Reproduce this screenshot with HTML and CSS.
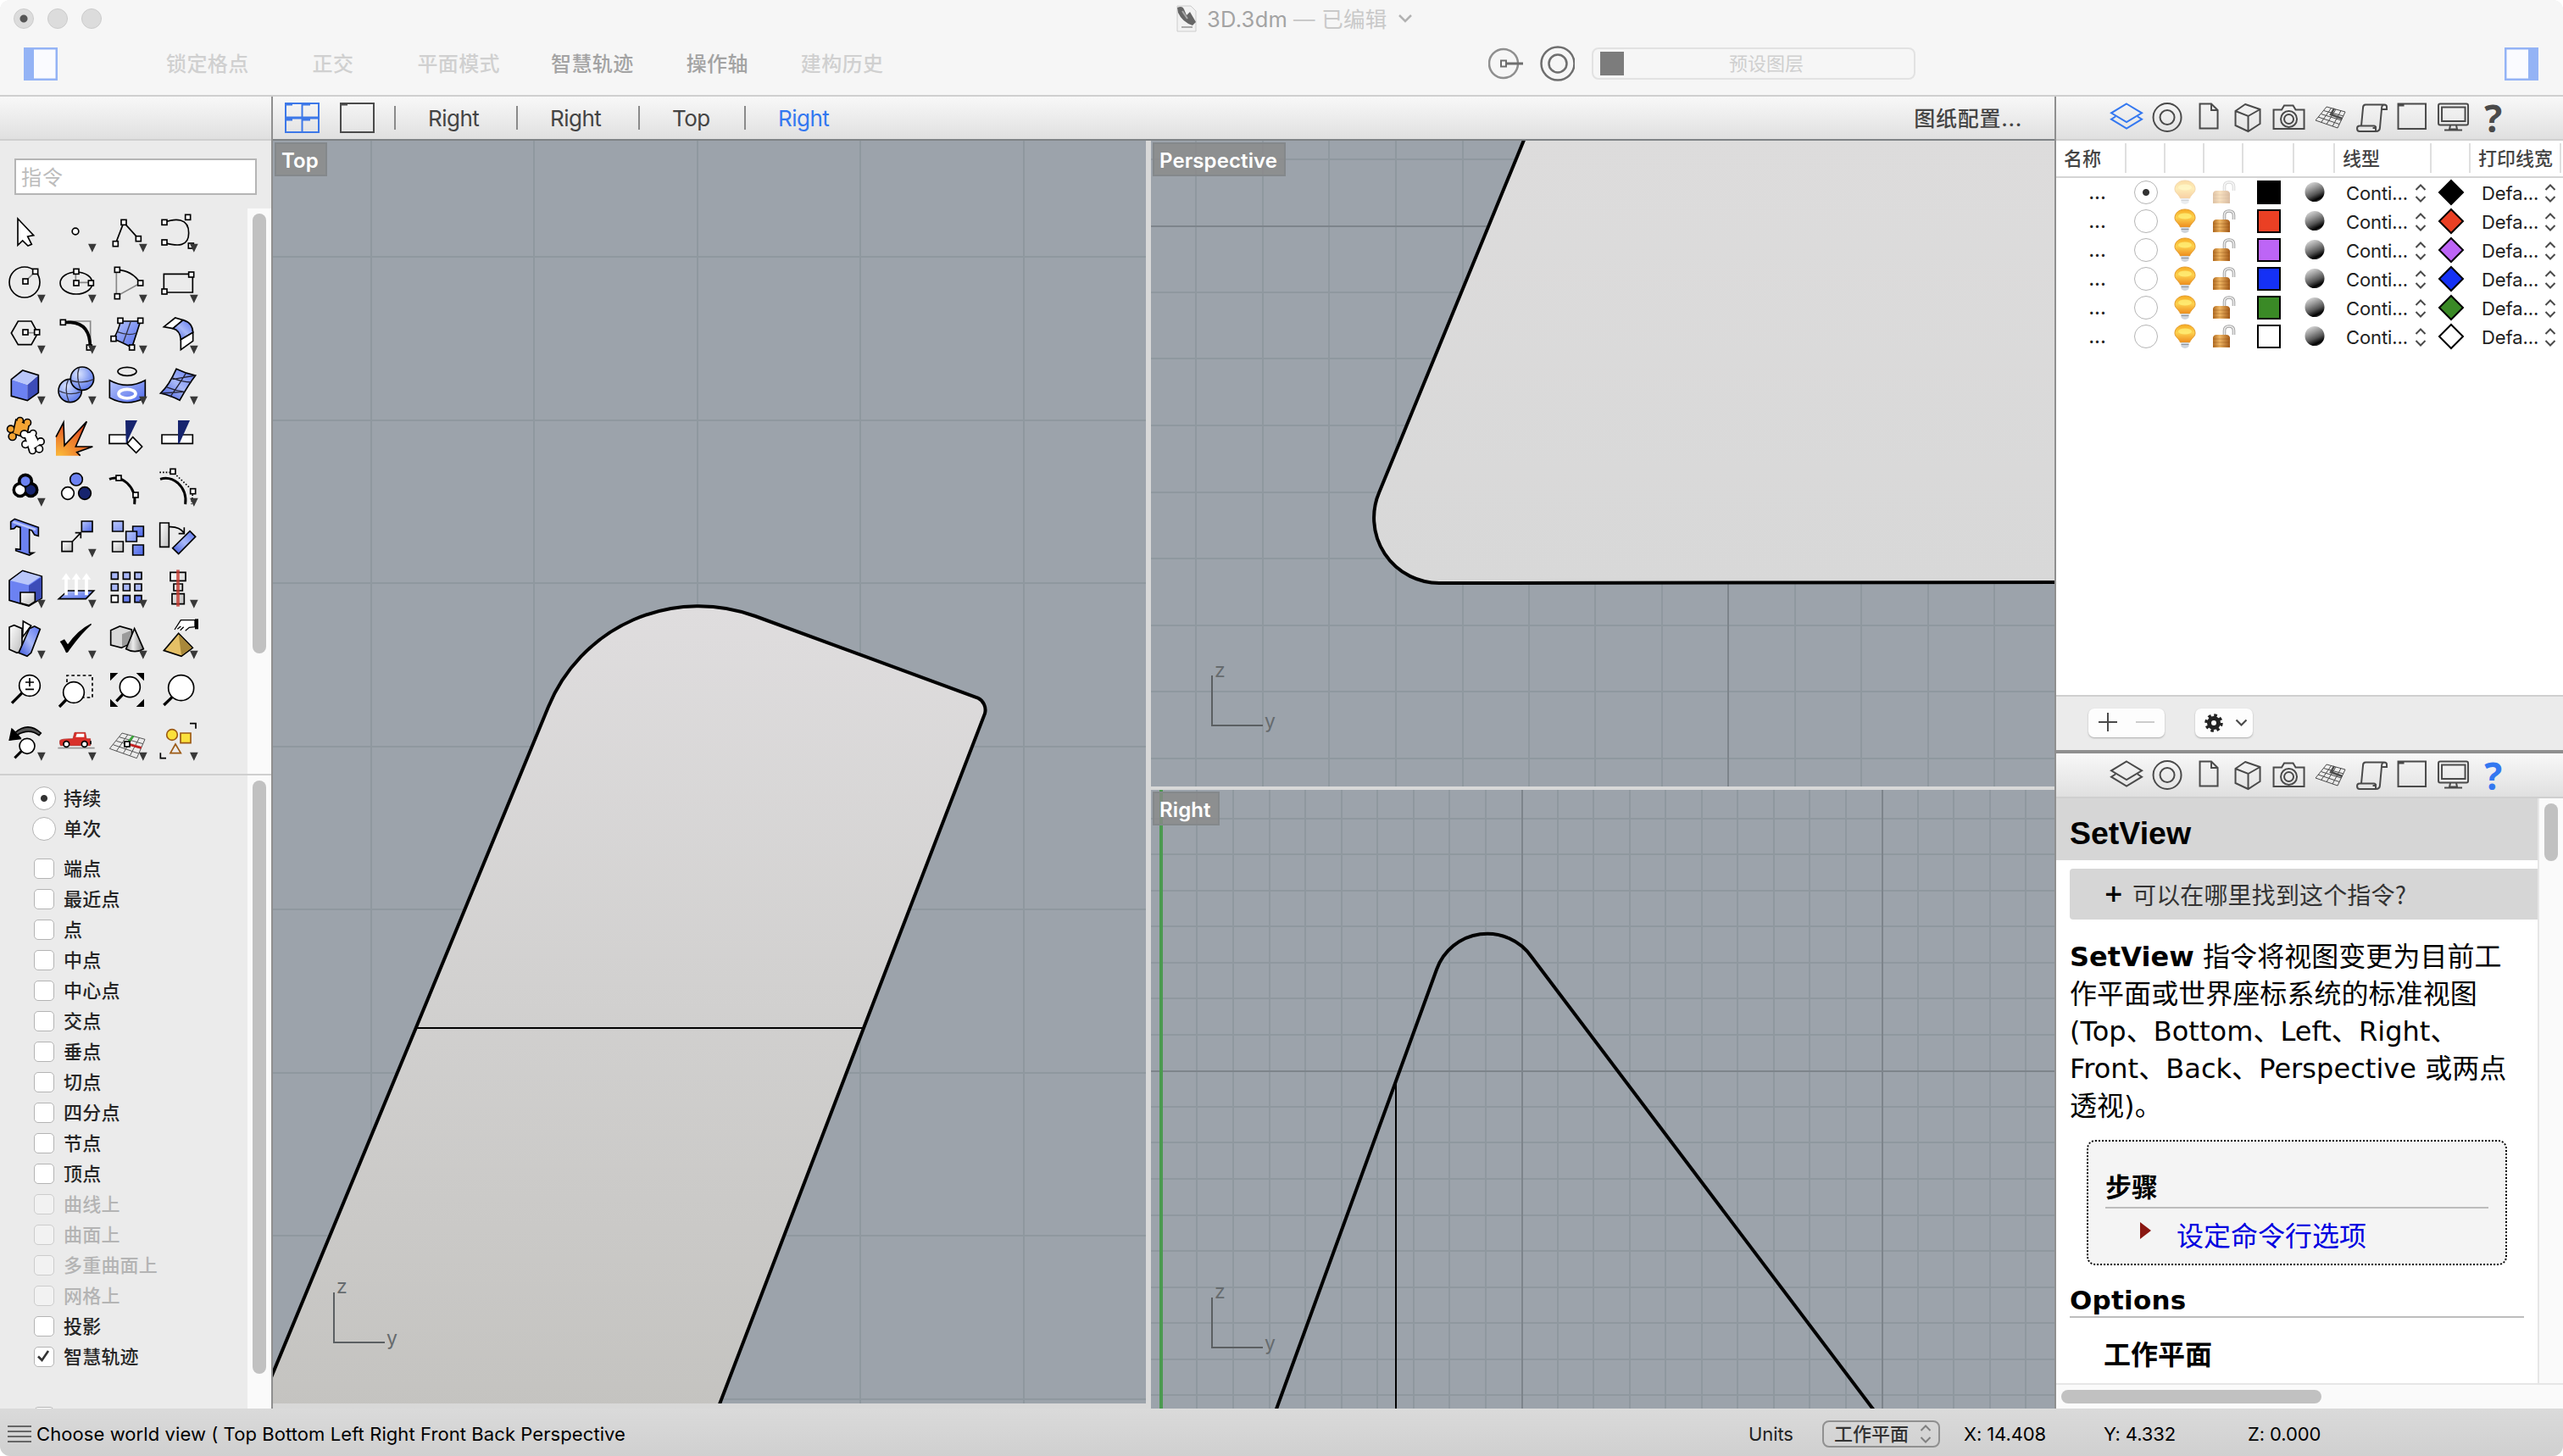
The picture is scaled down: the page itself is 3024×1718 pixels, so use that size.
FILE: index.html
```html
<!DOCTYPE html>
<html lang="zh-CN">
<head>
<meta charset="utf-8">
<title>3D.3dm</title>
<link rel="stylesheet" href="styles.css">
</head>
<body>
<svg class="defs" width="0" height="0">
  <defs>
    <linearGradient id="blue" x1="0" y1="0" x2="1" y2="1"><stop offset="0" stop-color="#b9c7fb"/><stop offset="1" stop-color="#4d68ea"/></linearGradient>
    <linearGradient id="blueV" x1="0" y1="1" x2="1" y2="0"><stop offset="0" stop-color="#3550d8"/><stop offset=".5" stop-color="#a9b9f8"/><stop offset="1" stop-color="#5a73ee"/></linearGradient>
    <radialGradient id="ball" cx=".35" cy=".3" r=".75"><stop offset="0" stop-color="#dbe5ff"/><stop offset=".6" stop-color="#8ba2f3"/><stop offset="1" stop-color="#5a76e8"/></radialGradient>
    <linearGradient id="grey" x1="0" y1="0" x2="1" y2="1"><stop offset="0" stop-color="#fff"/><stop offset="1" stop-color="#bdbdbd"/></linearGradient>
    <linearGradient id="cone" x1="0" y1="0" x2="1" y2="0"><stop offset="0" stop-color="#888"/><stop offset=".4" stop-color="#eee"/><stop offset="1" stop-color="#777"/></linearGradient>
    <radialGradient id="fire" cx=".1" cy="1" r="1.1"><stop offset="0" stop-color="#fbb93a"/><stop offset="1" stop-color="#e0451f"/></radialGradient>
    <linearGradient id="bulbG" x1="0" y1="0" x2="0" y2="1"><stop offset="0" stop-color="#f6ab22"/><stop offset=".45" stop-color="#fdd24f"/><stop offset="1" stop-color="#ee8c1e"/></linearGradient>
    <linearGradient id="lockG" x1="0" y1="0" x2="1" y2="0"><stop offset="0" stop-color="#b06a20"/><stop offset=".4" stop-color="#f0b765"/><stop offset="1" stop-color="#a35a18"/></linearGradient>
    <linearGradient id="sphG" x1=".3" y1="0" x2=".75" y2="1"><stop offset="0" stop-color="#d8d8d8"/><stop offset=".3" stop-color="#9a9a9a"/><stop offset=".6" stop-color="#555"/><stop offset=".85" stop-color="#000"/><stop offset="1" stop-color="#555"/></linearGradient>
    <linearGradient id="topG" x1="0" y1="0" x2="0" y2="1"><stop offset="0" stop-color="#dfddde"/><stop offset=".5" stop-color="#d1d0cf"/><stop offset="1" stop-color="#c4c3c0"/></linearGradient>
    <linearGradient id="perG" x1="0" y1="0" x2="0" y2="1"><stop offset="0" stop-color="#dddcdc"/><stop offset="1" stop-color="#d8d8d8"/></linearGradient>
    <rect id="h" x="-9" y="-9" width="18" height="18" fill="#fff" stroke="#000" stroke-width="5"/>
    <path id="tri" d="M132 128h29l-14.500 30z" fill="#383838"/>
    <g id="pzA"><path d="M58 34 100 50 92 92 48 78Z"/><circle cx="71" cy="34" r="9"/><circle cx="97" cy="41" r="10"/><circle cx="38" cy="64" r="10"/><circle cx="44" cy="90" r="11"/></g>
    <g id="pzB"><path d="M86 80 118 76 140 118 106 140Z"/><circle cx="86" cy="82" r="11"/><circle cx="117" cy="79" r="9"/><circle cx="144" cy="108" r="10"/><circle cx="139" cy="134" r="10"/><circle cx="115" cy="140" r="9"/><circle cx="90" cy="118" r="10"/></g>
    <symbol id="i-layers" viewBox="0 0 48 50"><path d="M24 8.500 42 19.300 24 30 6 19.300ZM11 23.500 6 26.700 24 37.700 42 26.700 37 23.500"/></symbol>
    <symbol id="i-rings" viewBox="0 0 48 50"><circle cx="24" cy="24.500" r="16.500"/><circle cx="24" cy="24.500" r="8.500"/></symbol>
    <symbol id="i-doc" viewBox="0 0 48 50"><path d="M14.500 8.500H28L35.500 16V37.500H14.500ZM28 8.500V16H35.500"/></symbol>
    <symbol id="i-box" viewBox="0 0 48 50"><path d="M20 9 37.500 15V32L23.500 41 8.500 34V17ZM8.500 17 23.500 23 37.500 15M23.500 23V41"/></symbol>
    <symbol id="i-cam" viewBox="0 0 48 50"><path d="M5.500 15.500H15L18 10.500H28.500L31.500 15.500H41.500V38H5.500Z"/><circle cx="23.500" cy="26.500" r="9.500"/><circle cx="23.500" cy="26.500" r="5.500"/></symbol>
    <symbol id="i-plane" viewBox="0 0 48 50"><path stroke-width="1" d="M20 12 42 18 33 37 7 28ZM16.500 16.500 40 23M13.500 20.500 37.500 28M10 24 35 32.500M25.500 13.500 13.500 30.500M31 15 20 32.500M37 16.500 27 35"/><path stroke-width="2.500" d="M29 14 25 21 38.500 26"/></symbol>
    <symbol id="i-scroll" viewBox="0 0 48 50"><path d="M36 15H42V12Q42 9.500 39 9.500H17Q14 9.500 14 13L12 34M39 9.500Q36 10 36 14L34 36Q34 41 29 41H10Q7 41 7 37.500 7 34.500 10 34.500H27Q29 34.500 29 37H25.500M29 35V41"/></symbol>
    <symbol id="i-win" viewBox="0 0 48 50"><path d="M7.500 8.500H40V38H7.500ZM8 10.500H14.500"/></symbol>
    <symbol id="i-mon" viewBox="0 0 48 50"><rect x="7" y="8.500" width="35" height="25" rx="2"/><path d="M11 12.500H38.500V29H11ZM21 34 20 38.500H29L28 34M14 39.500H35"/></symbol>
    <symbol id="i-bulb" viewBox="0 0 28 30"><path d="M14 1C7 1 2 5.500 2 11 2 15.500 7 17.500 8.500 22H19.500C21 17.500 26 15.500 26 11 26 5.500 21 1 14 1Z" fill="url(#bulbG)" stroke="#e39a2a" stroke-width="1"/><ellipse cx="14" cy="9" rx="8" ry="3.500" fill="#fff07a" opacity=".75"/><path d="M9.500 22H18.500V27Q14 31 9.500 27Z" fill="#cfd4db"/><path d="M9.500 24.500H18.500" stroke="#8d939c"/></symbol>
    <symbol id="i-lock" viewBox="0 0 28 30"><path d="M14.500 14V8Q14.500 3 20 3 25.500 3 25.500 8V13" fill="none" stroke="#a2a2a2" stroke-width="3.600"/><path d="M14.500 14V8Q14.500 3 20 3 25.500 3 25.500 8V13" fill="none" stroke="#ededed" stroke-width="1.600"/><path d="M1 16Q2 13 5 13H17Q20 13 21 16V28H1Z" fill="url(#lockG)"/><path d="M1 18H21M1 22H21M1 26H21" stroke="#8a4a12" opacity=".35"/></symbol>
    <symbol id="i-sph" viewBox="0 0 28 30"><circle cx="14" cy="14.500" r="11.500" fill="url(#sphG)"/></symbol>
    <symbol id="i-upd" viewBox="0 0 14 24"><path d="M1.500 8 7 2.500 12.500 8M1.500 16 7 21.500 12.500 16" fill="none" stroke="#4a4a4a" stroke-width="2"/></symbol>
    <symbol id="i-dia" viewBox="0 0 32 32"><path d="M16 2 30 16 16 30 2 16Z" stroke="#000" stroke-width="2"/></symbol>
    <g id="axis" fill="none" stroke="#5b5f62" stroke-width="2"><path d="M0-59V1M-1 0H60"/></g>
  </defs>
</svg>

<header class="head">
  <div class="titlebar">
    <div class="lights"><i class="edited"></i><i></i><i></i></div>
    <div class="doc">
      <svg width="26" height="32" viewBox="0 0 26 32"><path d="M2 1H18L24 7V31H2Z" fill="#f2f2f2" stroke="#ccc"/><path d="M2 3Q8 0 10 5L13 12 17 8 24 20 20 24Q8 20 3 9Z" fill="#666"/><path d="M8 7 14 16M7 26H20" stroke="#aaa" stroke-width="2"/></svg>
      <span class="name">3D.3dm</span><span class="state">— 已编辑</span>
      <svg width="18" height="12" viewBox="0 0 18 12"><path d="M2 2 9 9 16 2" fill="none" stroke="#b2b2b2" stroke-width="2.500"/></svg>
    </div>
  </div>
  <div class="tools">
    <svg class="side" width="40" height="39" viewBox="0 0 40 39"><rect x="1" y="1" width="38" height="37" fill="#fafbff" stroke="#94b3f5" stroke-width="3"/><path d="M0 0H12V39H0Z" fill="#94b3f5"/></svg>
    <nav class="modes"><span>锁定格点</span><span>正交</span><span>平面模式</span><span class="on">智慧轨迹</span><span class="on">操作轴</span><span>建构历史</span></nav>
    <svg class="rec" width="102" height="44" viewBox="0 0 102 44" fill="none"><circle cx="18" cy="22" r="17" stroke="#8f8f8f" stroke-width="2.500"/><path d="M21 22H41" stroke="#6e6e6e" stroke-width="3"/><rect x="15" y="18.500" width="6" height="7" stroke="#6e6e6e" stroke-width="2" fill="#fff"/><circle cx="82" cy="22" r="19.500" stroke="#6e6e6e" stroke-width="2.500"/><circle cx="82" cy="22" r="10.500" stroke="#6e6e6e" stroke-width="2.500"/></svg>
    <div class="layerbox"><i></i><span>预设图层</span></div>
    <svg class="side end" width="40" height="39" viewBox="0 0 40 39"><rect x="1" y="1" width="38" height="37" fill="#fafbff" stroke="#94b3f5" stroke-width="3"/><path d="M28 0H40V39H28Z" fill="#94b3f5"/></svg>
  </div>
</header>

<main class="work">
  <aside class="left">
    <div class="bar"></div>
    <div class="cmd"><div class="field">指令</div></div>
    <div class="pane palette">
      <div class="icons">
        <svg viewBox="0 0 180 180"><path d="M63 39V133L80 117 99 135 112 130 98 102 119 98Z" fill="#fff" stroke="#000" stroke-width="5"/></svg>
        <svg viewBox="0 0 180 180"><circle cx="87" cy="84" r="11.500" fill="#fff" stroke="#000" stroke-width="5"/><use href="#tri"/></svg>
        <svg viewBox="0 0 180 180"><path d="M49 128 78 52 130 110"/><use href="#h" x="49" y="128"/><use href="#h" x="78" y="52"/><use href="#h" x="130" y="110"/><use href="#tri"/></svg>
        <svg viewBox="0 0 180 180"><path d="M42 52C80 38 128 35 128 90 128 138 90 138 42 124"/><use href="#h" x="42" y="52"/><use href="#h" x="42" y="123"/><use href="#h" x="125" y="34"/><use href="#h" x="136" y="135"/><use href="#tri"/></svg>

        <svg viewBox="0 0 180 180"><circle cx="87" cy="84" r="54"/><path class="g" d="M90 81 125 46"/><use href="#h" x="90" y="81"/><use href="#h" x="125" y="46"/><use href="#tri"/></svg>
        <svg viewBox="0 0 180 180"><ellipse cx="90" cy="87" rx="57" ry="39"/><path class="g" d="M88 46V85H142"/><use href="#h" x="90" y="46"/><use href="#h" x="90" y="87"/><use href="#h" x="142" y="87"/><use href="#tri"/></svg>
        <svg viewBox="0 0 180 180"><path class="g" d="M52 40V134L137 87"/><path d="M55 40Q107 42 137 87"/><use href="#h" x="55" y="40"/><use href="#h" x="137" y="87"/><use href="#h" x="55" y="134"/><use href="#tri"/></svg>
        <svg viewBox="0 0 180 180"><path d="M40 55H142V120H40Z"/><use href="#h" x="137" y="57"/><use href="#h" x="42" y="117"/><use href="#tri"/></svg>

        <svg viewBox="0 0 180 180"><path d="M40 84 64 42H111L134 84 111 125H64Z"/><path class="g" d="M90 83H131"/><use href="#h" x="90" y="81"/><use href="#h" x="131" y="81"/><use href="#tri"/></svg>
        <svg viewBox="0 0 180 180"><path class="g" d="M60 42H140V125"/><path stroke-width="11" d="M43 46H70Q140 50 139 135"/><use href="#h" x="43" y="46"/><use href="#h" x="136" y="135"/><use href="#tri"/></svg>
        <svg viewBox="0 0 180 180"><path fill="url(#blue)" d="M66 42H137Q125 80 107 135Q75 118 42 104Q62 70 66 42Z"/><path stroke-width="4" stroke="#334" d="M56 80Q95 95 122 84M103 42Q90 80 76 118"/><use href="#h" x="66" y="40"/><use href="#h" x="137" y="40"/><use href="#h" x="42" y="104"/><use href="#h" x="107" y="135"/><use href="#tri"/></svg>
        <svg viewBox="0 0 180 180"><path fill="#fff" d="M40 62 80 30 108 38 72 68Z"/><path fill="url(#blueV)" d="M72 68 108 38Q142 48 143 82L100 107Q98 75 72 68Z"/><path fill="#fff" d="M100 107 143 82V112L100 143Z"/><use href="#tri"/></svg>

        <svg viewBox="0 0 180 180"><path fill="#6c82f2" stroke="none" d="M40 68 97 87V143L40 127Z"/><path fill="#3c4cb8" stroke="none" d="M97 87 136 53V115L97 143Z"/><path fill="#bac7fa" stroke="none" d="M40 68 80 36 136 53 97 87Z"/><path d="M40 68 80 36 136 53V115L97 143 40 127Z"/><use href="#tri"/></svg>
        <svg viewBox="0 0 180 180"><circle cx="68" cy="108" r="41" fill="url(#ball)"/><path stroke="#334" stroke-width="4" d="M28 108Q68 128 105 112M62 68Q46 100 64 148"/><circle cx="111" cy="65" r="41" fill="url(#ball)"/><path stroke="#334" stroke-width="4" d="M71 72Q115 85 151 68M100 26Q88 60 106 105"/><use href="#tri"/></svg>
        <svg viewBox="0 0 180 180"><ellipse cx="90" cy="40" rx="33" ry="15"/><path fill="url(#blue)" d="M28 71Q90 105 154 71V133Q90 167 28 133Z"/><ellipse cx="90" cy="119" rx="30" ry="16" stroke="#fff" stroke-width="11"/><use href="#tri"/></svg>
        <svg viewBox="0 0 180 180"><path fill="url(#blueV)" d="M84 31Q118 48 152 54Q128 85 96 142Q65 125 28 117Q58 90 84 31Z"/><path stroke="#223" stroke-width="4" d="M68 62Q105 78 137 78M48 95Q80 108 113 112M118 46Q95 85 62 130M152 54 70 68M113 112 30 117"/><use href="#tri"/></svg>

        <svg viewBox="0 0 180 180"><use href="#pzA" stroke-width="10"/><use href="#pzA" fill="#f5a433" stroke="none"/><use href="#pzB" stroke-width="10"/><use href="#pzB" fill="#fff" stroke="none"/></svg>
        <svg viewBox="0 0 180 180"><path fill="url(#fire)" stroke="none" d="M18 158V92L45 40 48 122 127 37 88 126 148 126 92 143 104 158Z"/><path d="M18 92 45 40 48 122 127 37 88 126 148 126 92 146 104 158"/></svg>
        <svg viewBox="0 0 180 180"><path fill="#fff" d="M27 84H90V115H27ZM110 92 143 126 122 148 90 116Z"/><path fill="#16246e" stroke="none" d="M84 33H126L86 116Z"/></svg>
        <svg viewBox="0 0 180 180"><path fill="#fff" d="M33 84H142V115H33Z"/><path fill="#16246e" stroke="none" d="M90 33H132L95 115H90Z"/></svg>

        <svg viewBox="0 0 180 180"><g stroke-width="15"><circle cx="90" cy="68" r="20"/><circle cx="71" cy="99" r="20"/><circle cx="109" cy="99" r="20"/></g><g stroke="none"><circle cx="71" cy="99" r="17" fill="#fff"/><circle cx="109" cy="99" r="17" fill="#16246e"/></g><circle cx="90" cy="68" r="19" fill="#6c82f2"/><use href="#tri"/></svg>
        <svg viewBox="0 0 180 180"><circle cx="90" cy="62" r="22" fill="#6c82f2"/><circle cx="60" cy="111" r="22" fill="#fff"/><circle cx="120" cy="111" r="22" fill="#16246e"/></svg>
        <svg viewBox="0 0 180 180"><path stroke-width="9" d="M27 61Q60 48 90 75 122 105 116 150"/><use href="#h" x="60" y="57"/><use href="#h" x="120" y="117"/></svg>
        <svg viewBox="0 0 180 180"><path stroke-width="9" d="M27 61Q60 50 90 75 122 105 116 150"/><path stroke-dasharray="5 6" d="M25 37H60M85 48 132 92M142 115 138 150"/><use href="#h" x="72" y="34"/><use href="#h" x="143" y="104"/><use href="#tri"/></svg>

        <svg viewBox="0 0 180 180"><path fill="#6c82f2" d="M38 32 52 22 136 52V82L122 78 112 62 104 60V142L118 142 104 150 56 134V128L72 130V52L58 48 50 56 38 58Z"/><path stroke="#bac7fa" stroke-width="8" d="M46 32 126 60"/></svg>
        <svg viewBox="0 0 180 180"><path fill="url(#blue)" d="M109 30H147V67H109Z"/><path fill="url(#grey)" d="M39 102H76V137H39Z"/><path d="M76 102 106 71M86 71H106V91"/><use href="#tri"/></svg>
        <svg viewBox="0 0 180 180"><path fill="url(#blue)" d="M38 30H76V66H38ZM110 48H148V84H110Z"/><path fill="url(#blue)" d="M86 66H124V102H86ZM110 114H148V150H110Z"/><path fill="url(#grey)" d="M38 102H76V138H38Z"/></svg>
        <svg viewBox="0 0 180 180"><path fill="url(#grey)" d="M26 36H58V121H26Z"/><path fill="url(#blueV)" d="M132 65 152 85 92 146 71 125Z"/><path d="M58 50Q95 48 112 72M112 52V74H92"/></svg>

        <svg viewBox="0 0 180 180"><path fill="#6c82f2" d="M33 60 80 25 148 45V122L102 150 33 130Z"/><path fill="#bac7fa" stroke="none" d="M36 60 80 28 144 46 100 76Z"/><path fill="#3c4cb8" stroke="none" d="M102 78 146 48V122L124 134V100L102 112Z"/><path fill="url(#grey)" d="M72 102 124 102V134L102 148 72 140Z"/><use href="#tri"/></svg>
        <svg viewBox="0 0 180 180"><path fill="url(#blue)" d="M60 96H152L124 125H28Z"/><path stroke="#fff" stroke-width="11" d="M54 112V50M90 112V50M126 112V50"/><path fill="#fff" stroke="none" d="M38 56 54 34 70 56ZM74 56 90 34 106 56ZM110 56 126 34 142 56Z"/><use href="#tri"/></svg>
        <svg viewBox="0 0 180 180"><path fill="#a9b7f8" d="M34 31H58V55H34ZM76 31H100V55H76ZM117 31H141V55H117ZM34 72H58V96H34ZM76 72H100V96H76ZM117 72H141V96H117Z"/><path fill="#fff" d="M34 113H58V137H34Z"/><path fill="#6c82f2" d="M76 113H100V137H76ZM117 113H141V137H117Z"/><use href="#tri"/></svg>
        <svg viewBox="0 0 180 180"><path fill="url(#grey)" d="M63 31H117V61H63ZM75 72H106V96H75ZM69 107H112V143H69Z"/><path stroke="#c8372c" stroke-opacity=".8" stroke-width="11" d="M90 22V152"/><use href="#tri"/></svg>

        <svg viewBox="0 0 180 180"><path fill="url(#grey)" d="M33 45 50 38 78 50V130L60 136 33 124Z"/><path fill="#fff" d="M82 24 110 40 80 80Z"/><path fill="url(#blueV)" d="M104 50 122 42 142 52 110 136 96 148 66 136Z"/><use href="#tri"/></svg>
        <svg viewBox="0 0 180 180"><path fill="#000" stroke="none" d="M32 96 48 88 60 106Q95 55 142 32L144 36Q105 70 60 134L54 136Q44 112 32 96Z"/><use href="#tri"/></svg>
        <svg viewBox="0 0 180 180"><path fill="#d8d8d8" d="M32 56 64 42 106 54 106 100 70 118 32 108Z"/><path fill="#9a9a9a" stroke="none" d="M72 70 104 57V100L72 115Z"/><path fill="url(#cone)" d="M116 50 148 122Q118 140 86 122Z"/><use href="#tri"/></svg>
        <svg viewBox="0 0 180 180"><path fill="#e5c066" d="M92 67 142 118 102 148 40 128Z"/><path fill="#a8883a" stroke="none" d="M92 70 139 118 102 145Z"/><path fill="#fff" stroke-width="4" d="M78 54 100 20H150V44L130 46 116 58M88 52 100 42M98 56 110 44"/><path fill="#000" stroke="none" d="M150 16H162V52H150Z"/><use href="#tri"/></svg>

        <svg viewBox="0 0 180 180"><path stroke-width="10" d="M78 98 42 134"/><circle cx="105" cy="72" r="37" fill="#fff"/><path d="M90 60H120M105 45V75M90 85H120"/></svg>
        <svg viewBox="0 0 180 180"><path stroke-width="10" d="M56 120 30 147"/><path stroke-dasharray="11 9" d="M57 60V36H147V114H110"/><circle cx="81" cy="96" r="37" fill="#fff"/></svg>
        <svg viewBox="0 0 180 180"><path fill="#000" stroke="none" d="M30 27H58L30 55ZM150 27V55L122 27ZM30 147V119L58 147ZM150 147H122L150 119Z"/><path stroke-width="10" d="M74 104 52 127"/><circle cx="100" cy="77" r="36" fill="#fff"/></svg>
        <svg viewBox="0 0 180 180"><path stroke-width="10" d="M70 112 40 141"/><circle cx="101" cy="80" r="45" fill="#fff"/></svg>

        <svg viewBox="0 0 180 180"><path fill="#555" d="M145 60 138 68Q105 42 62 66L72 80 34 84 42 46 54 58Q100 18 145 60Z"/><path fill="#000" stroke="none" d="M32 86 44 44 76 78Z"/><path stroke-width="9" d="M76 124 52 148"/><circle cx="96" cy="106" r="27" fill="#fff"/><use href="#tri"/></svg>
        <svg viewBox="0 0 180 180"><path stroke="#999" stroke-width="5" d="M25 113H155"/><path fill="#d9302a" stroke="#a91d18" stroke-width="2" d="M32 86Q36 80 78 80L84 58H122L126 80H140V104H34Q30 96 32 86Z"/><path fill="#fff" stroke="none" d="M88 74 92 62H118V74Z"/><circle cx="55" cy="99" r="10" fill="#fff"/><circle cx="119" cy="99" r="10" fill="#fff"/><path d="M141 88V100"/><use href="#tri"/></svg>
        <svg viewBox="0 0 180 180"><path stroke="#555" stroke-width="3" d="M72 60 153 82 124 149 28 115ZM62 74 146 98M52 88 138 114M40 101 130 132M92 66 52 124M113 71 76 132M133 77 100 140"/><path stroke="#3aa53a" stroke-width="8" d="M94 92 112 70"/><path stroke="#c32222" stroke-width="9" d="M98 100 140 112"/><use href="#h" x="90" y="99"/><use href="#tri"/></svg>
        <svg viewBox="0 0 180 180"><path d="M132 26H153V44M28 130V149H48"/><g stroke="#9c5a14"><circle cx="69" cy="66" r="19" fill="#fbe13c"/><path fill="#fbe13c" d="M99 60H135V95H99Z"/><path d="M81 99 100 131H63Z"/></g><use href="#tri"/></svg>
      </div>
      <div class="scroll"><i class="thumb t1"></i></div>
    </div>
    <div class="pane snaps">
      <div class="list">
        <label><i class="radio on"></i>持续</label>
        <label class="last"><i class="radio"></i>单次</label>
        <label><i class="box"></i>端点</label>
        <label><i class="box"></i>最近点</label>
        <label><i class="box"></i>点</label>
        <label><i class="box"></i>中点</label>
        <label><i class="box"></i>中心点</label>
        <label><i class="box"></i>交点</label>
        <label><i class="box"></i>垂点</label>
        <label><i class="box"></i>切点</label>
        <label><i class="box"></i>四分点</label>
        <label><i class="box"></i>节点</label>
        <label><i class="box"></i>顶点</label>
        <label class="off"><i class="box"></i>曲线上</label>
        <label class="off"><i class="box"></i>曲面上</label>
        <label class="off"><i class="box"></i>多重曲面上</label>
        <label class="off"><i class="box"></i>网格上</label>
        <label><i class="box"></i>投影</label>
        <label><i class="box"><svg width="20" height="20" viewBox="0 0 20 20"><path d="M4 10.500 8.500 15 16 4" fill="none" stroke="#333" stroke-width="2.600"/></svg></i>智慧轨迹</label>
        <label class="cut"><i class="box"></i></label>
      </div>
      <div class="scroll"><i class="thumb t2"></i></div>
    </div>
  </aside>

  <section class="center">
    <div class="bar tabs">
      <svg width="41" height="36" viewBox="0 0 41 36" fill="none" stroke="#3d78e8" stroke-width="2"><path d="M1 1H40V35H1ZM20.500 1V35"/><path stroke-width="3" d="M1 18H40M1 2H9M21 2H30M1 20H9M21 20H30"/></svg>
      <svg width="41" height="36" viewBox="0 0 41 36" fill="none" stroke="#4a4a4a" stroke-width="2"><path d="M1 1H40V35H1Z"/><path stroke-width="3" d="M1 2H9"/></svg>
      <span class="tab">Right</span><span class="tab">Right</span><span class="tab top">Top</span><span class="tab cur">Right</span>
      <span class="layout">图纸配置...</span>
    </div>
    <div class="views">
      <div class="vp vtop">
        <svg width="1030" height="1490" viewBox="322 166 1030 1490">
          <path class="grid" d="M438 166V1656M630 166V1656M823 166V1656M1015 166V1656M1208 166V1656M322 303H1352M322 496H1352M322 688H1352M322 881H1352M322 1073H1352M322 1266H1352M322 1458H1352M322 1651H1352"/>
          <path fill="url(#topG)" d="M318 1630 490.800 1212.700 647 834A192 192 0 0 1 891 727L1153.700 823.500A16 16 0 0 1 1162 842L1019 1213 849 1656 820 1670H318Z"/>
          <path class="edge" d="M318 1630 490.800 1212.700 647 834A192 192 0 0 1 891 727L1153.700 823.500A16 16 0 0 1 1162 842L1019 1213 847 1662"/>
          <path d="M491 1213H1019" stroke="#000" stroke-width="2"/>
          <use href="#axis" x="394" y="1584"/><text class="ax" x="397" y="1526">z</text><text class="ax" x="456" y="1587">y</text>
        </svg>
        <b class="tag">Top</b>
      </div>
      <div class="stack">
        <div class="vp vper">
          <svg width="1066" height="762" viewBox="1358 166 1066 762">
            <path class="grid" d="M1411 166V928M1490 166V928M1568 166V928M1647 166V928M1726 166V928M1804 166V928M1882 166V928M1961 166V928M2118 166V928M2196 166V928M2275 166V928M2353 166V928M1358 188H2424M1358 345H2424M1358 423H2424M1358 502H2424M1358 581H2424M1358 659H2424M1358 738H2424M1358 816H2424M1358 895H2424"/>
            <path class="major" d="M2039 166V928M1358 267H2424"/>
            <path fill="url(#perG)" stroke="#000" stroke-width="4" d="M1801 158 1627.300 580.700A77 77 0 0 0 1698 688L2430 687V158Z"/>
            <use href="#axis" x="1430" y="856"/><text class="ax" x="1433" y="799">z</text><text class="ax" x="1492" y="859">y</text>
          </svg>
          <b class="tag">Perspective</b>
        </div>
        <div class="vp vright">
          <svg width="1066" height="730" viewBox="1358 932 1066 730">
            <path class="grid" d="M1412 932V1662M1455 932V1662M1498 932V1662M1540 932V1662M1583 932V1662M1625 932V1662M1668 932V1662M1710 932V1662M1753 932V1662M1838 932V1662M1880 932V1662M1923 932V1662M1965 932V1662M2008 932V1662M2050 932V1662M2093 932V1662M2135 932V1662M2178 932V1662M2263 932V1662M2305 932V1662M2348 932V1662M2390 932V1662M1358 966H2424M1358 1008H2424M1358 1051H2424M1358 1093H2424M1358 1136H2424M1358 1178H2424M1358 1221H2424M1358 1306H2424M1358 1348H2424M1358 1391H2424M1358 1434H2424M1358 1476H2424M1358 1519H2424M1358 1561H2424M1358 1604H2424M1358 1646H2424"/>
            <path class="major" d="M1796 932V1662M2221 932V1662M1358 1264H2424"/>
            <path d="M1370 932V1662" stroke="#4b9a50" stroke-width="4"/>
            <path class="edge" d="M1504 1668 1695 1144A63.500 63.500 0 0 1 1807 1129L2214 1668"/>
            <path d="M1647 1277V1662" stroke="#000" stroke-width="2"/>
            <use href="#axis" x="1430" y="1590"/><text class="ax" x="1433" y="1532">z</text><text class="ax" x="1492" y="1593">y</text>
          </svg>
          <b class="tag">Right</b>
        </div>
      </div>
    </div>
  </section>

  <aside class="right">
    <div class="bar insp">
      <svg class="cur"><use href="#i-layers"/></svg><svg><use href="#i-rings"/></svg><svg><use href="#i-doc"/></svg><svg><use href="#i-box"/></svg><svg><use href="#i-cam"/></svg><svg><use href="#i-plane"/></svg><svg><use href="#i-scroll"/></svg><svg><use href="#i-win"/></svg><svg><use href="#i-mon"/></svg><b>?</b>
    </div>
    <div class="row th"><span>名称</span><span></span><span></span><span></span><span></span><span></span><span>线型</span><span></span><span>打印线宽</span></div>
    <div class="rows">
      <div class="row"><span class="dots">...</span><span><i class="radio on"></i></span><span><svg class="ic dim"><use href="#i-bulb"/></svg></span><span><svg class="ic dim"><use href="#i-lock"/></svg></span><span><i class="sw black"></i></span><span><svg class="ic"><use href="#i-sph"/></svg></span><span class="txt">Conti...<svg class="ud"><use href="#i-upd"/></svg></span><span><svg class="di black"><use href="#i-dia"/></svg></span><span class="txt">Defa...<svg class="ud"><use href="#i-upd"/></svg></span></div>
      <div class="row"><span class="dots">...</span><span><i class="radio"></i></span><span><svg class="ic"><use href="#i-bulb"/></svg></span><span><svg class="ic"><use href="#i-lock"/></svg></span><span><i class="sw red"></i></span><span><svg class="ic"><use href="#i-sph"/></svg></span><span class="txt">Conti...<svg class="ud"><use href="#i-upd"/></svg></span><span><svg class="di red"><use href="#i-dia"/></svg></span><span class="txt">Defa...<svg class="ud"><use href="#i-upd"/></svg></span></div>
      <div class="row"><span class="dots">...</span><span><i class="radio"></i></span><span><svg class="ic"><use href="#i-bulb"/></svg></span><span><svg class="ic"><use href="#i-lock"/></svg></span><span><i class="sw violet"></i></span><span><svg class="ic"><use href="#i-sph"/></svg></span><span class="txt">Conti...<svg class="ud"><use href="#i-upd"/></svg></span><span><svg class="di violet"><use href="#i-dia"/></svg></span><span class="txt">Defa...<svg class="ud"><use href="#i-upd"/></svg></span></div>
      <div class="row"><span class="dots">...</span><span><i class="radio"></i></span><span><svg class="ic"><use href="#i-bulb"/></svg></span><span><svg class="ic"><use href="#i-lock"/></svg></span><span><i class="sw blue"></i></span><span><svg class="ic"><use href="#i-sph"/></svg></span><span class="txt">Conti...<svg class="ud"><use href="#i-upd"/></svg></span><span><svg class="di blue"><use href="#i-dia"/></svg></span><span class="txt">Defa...<svg class="ud"><use href="#i-upd"/></svg></span></div>
      <div class="row"><span class="dots">...</span><span><i class="radio"></i></span><span><svg class="ic"><use href="#i-bulb"/></svg></span><span><svg class="ic"><use href="#i-lock"/></svg></span><span><i class="sw green"></i></span><span><svg class="ic"><use href="#i-sph"/></svg></span><span class="txt">Conti...<svg class="ud"><use href="#i-upd"/></svg></span><span><svg class="di green"><use href="#i-dia"/></svg></span><span class="txt">Defa...<svg class="ud"><use href="#i-upd"/></svg></span></div>
      <div class="row"><span class="dots">...</span><span><i class="radio"></i></span><span><svg class="ic"><use href="#i-bulb"/></svg></span><span><svg class="ic"><use href="#i-lock"/></svg></span><span><i class="sw white"></i></span><span><svg class="ic"><use href="#i-sph"/></svg></span><span class="txt">Conti...<svg class="ud"><use href="#i-upd"/></svg></span><span><svg class="di white"><use href="#i-dia"/></svg></span><span class="txt">Defa...<svg class="ud"><use href="#i-upd"/></svg></span></div>
    </div>
    <div class="actions">
      <div class="btn add"><svg width="90" height="34" viewBox="0 0 90 34"><path d="M12 16H34M23 5V27" stroke="#4a4a4a" stroke-width="2"/><path d="M56 16H78" stroke="#ccc" stroke-width="2"/></svg></div>
      <div class="btn"><svg width="68" height="34" viewBox="0 0 68 34" fill="none" stroke="#222"><circle cx="22" cy="17" r="5.500" stroke-width="5"/><circle cx="22" cy="17" r="9" stroke-width="3.500" stroke-dasharray="3.530 3.530"/><path d="M48.500 13.500 54.500 19.500 60.500 13.500" stroke="#4a4a4a" stroke-width="2.200"/></svg></div>
    </div>
    <div class="bar insp second">
      <svg><use href="#i-layers"/></svg><svg><use href="#i-rings"/></svg><svg><use href="#i-doc"/></svg><svg><use href="#i-box"/></svg><svg><use href="#i-cam"/></svg><svg><use href="#i-plane"/></svg><svg><use href="#i-scroll"/></svg><svg><use href="#i-win"/></svg><svg><use href="#i-mon"/></svg><b class="cur">?</b>
    </div>
    <div class="help">
      <article>
        <h1>SetView</h1>
        <div class="where"><b>+</b>可以在哪里找到这个指令?</div>
        <p><b>SetView</b> 指令将视图变更为目前工<br>作平面或世界座标系统的标准视图<br>(Top、Bottom、Left、Right、<br>Front、Back、Perspective 或两点<br>透视)。</p>
        <div class="steps"><h2>步骤</h2><div class="step"><svg width="13" height="20" viewBox="0 0 13 20"><path d="M0 0 13 10 0 20Z" fill="#8a1812"/></svg><a>设定命令行选项</a></div></div>
        <h2 class="opt">Options</h2>
        <h3>工作平面</h3>
      </article>
      <div class="vtrack"><i></i></div>
    </div>
    <div class="htrack"><i></i></div>
  </aside>
</main>

<footer class="status">
  <svg width="28" height="22" viewBox="0 0 28 22"><path d="M0 2H28M0 8H28M0 14H28M0 20H28" stroke="#666" stroke-width="2"/></svg>
  <span class="prompt">Choose world view ( Top Bottom Left Right Front Back Perspective</span>
  <span class="units">Units</span>
  <span class="popup">工作平面<svg width="14" height="24" viewBox="0 0 14 24"><path d="M1.500 8 7 2.500 12.500 8M1.500 16 7 21.500 12.500 16" fill="none" stroke="#808080" stroke-width="2"/></svg></span>
  <span class="x">X: 14.408</span><span class="y">Y: 4.332</span><span class="z">Z: 0.000</span>
</footer>
</body>
</html>
```

FILE: styles.css
```css
* { box-sizing: border-box; }
html { background: #fff; }
body { margin: 0; width: 3024px; height: 1718px; display: flex; flex-direction: column; overflow: hidden; border-radius: 12px; background: #ebebeb; color: #222; font: 22px/1 Inter, "Noto Sans CJK SC", sans-serif; }
svg { display: block; flex: none; }
i { display: block; flex: none; font-style: normal; }
.defs { position: absolute; }

.head { height: 114px; flex: none; background: #f6f6f6; border-bottom: 2px solid #cfcfcf; }
.titlebar { height: 44px; display: flex; align-items: center; padding-left: 16px; }
.lights { display: flex; gap: 16px; }
.lights i { width: 24px; height: 24px; border-radius: 50%; background: #dcdcdc; border: 1px solid #cbcbcb; }
.lights .edited { background: radial-gradient(circle, #555 4px, #dcdcdc 5px); }
.doc { display: flex; align-items: center; margin-left: 1267px; font-size: 25.500px; }
.doc .name { color: #a3a3a3; margin-left: 11px; width: 102px; letter-spacing: .3px; padding-top: 1px; }
.doc .state { color: #c9c9c9; width: 123px; white-space: nowrap; letter-spacing: .3px; padding-top: 1px; }
.tools { height: 63px; display: flex; align-items: center; padding: 0 29px 0 28px; }
.modes { display: flex; width: 1660px; padding-left: 128px; font-size: 24px; letter-spacing: .4px; font-weight: 500; color: #d0d0d0; white-space: nowrap; }
.modes span { margin-right: 75px; }
.modes span:nth-child(3) { margin-right: 60px; }
.modes span:nth-child(4), .modes span:nth-child(5) { margin-right: 62px; }
.modes .on { color: #a3a3a3; }
.rec { margin-left: 28px; margin-top: -1px; }
.layerbox { width: 382px; height: 38px; margin-left: 20px; border: 2px solid #e2e2e2; border-radius: 8px; display: flex; align-items: center; padding-left: 8px; font-size: 22px; color: #cfcfcf; margin-top: -1px; }
.layerbox i { width: 28px; height: 28px; background: #7c7c7c; }
.layerbox span { margin-left: 124px; }
.side.end { margin-left: auto; }

.work { flex: 1; display: flex; min-height: 0; }
.bar { height: 52px; flex: none; background: linear-gradient(#f8f8f8, #e0e0e0); border-bottom: 2px solid #cfcfcf; }

.left { width: 322px; border-right: 2px solid #8f8f8f; display: flex; flex-direction: column; }
.cmd { height: 80px; flex: none; padding: 21px 0 0 17px; }
.field { width: 286px; height: 43px; border: 2px solid #b5b5b5; background: #fff; color: #bcbcbc; font-size: 24px; line-height: 42px; padding-left: 6px; letter-spacing: 1px; }
.pane { display: flex; justify-content: space-between; }
.palette { height: 669px; flex: none; border-bottom: 2px solid #cfcfcf; }
.icons { display: grid; grid-template-columns: repeat(4, 60px); grid-auto-rows: 60px; height: 660px; margin-top: -1px; }
.icons svg { width: 60px; height: 60px; fill: none; stroke: #000; stroke-width: 5; overflow: visible; }
.icons .g { stroke: #888; }
#tri { stroke: none; }
.scroll { width: 28px; background: #fafafa; padding-left: 6px; }
.thumb { width: 16px; border-radius: 8px; background: #c1c1c1; }
.t1 { height: 519px; margin-top: 6px; }
.t2 { height: 700px; margin-top: 6px; }
.snaps { flex: 1; min-height: 0; overflow: hidden; }
.list { padding: 9px 0 0 38px; }
.list label { display: flex; align-items: center; height: 36px; letter-spacing: .2px; font-weight: 500; color: #262626; white-space: nowrap; }
.list .last { margin-bottom: 11px; }
.list .off { color: #b4b4b4; }
.list .off .box { background: #f2f2f2; border-color: #ccc; }
.radio { width: 28px; height: 28px; border-radius: 50%; background: #fff; border: 1.500px solid #b4b4b4; }
.radio.on { background: radial-gradient(circle, #333 3.500px, #fff 4.500px); }
.list .radio { margin-right: 9px; }
.box { width: 24px; height: 24px; margin: 0 11px 0 2px; border-radius: 5px; background: #fff; border: 1.500px solid #b4b4b4; }
.list .cut { align-items: flex-start; padding-top: 41px; height: 66px; }

.center { width: 2104px; display: flex; flex-direction: column; border-right: 2px solid #8f8f8f; }
.tabs { display: flex; align-items: center; padding-left: 14px; border-color: #7f8386; font-size: 26px; color: #444; }
.tabs svg + svg { margin-left: 24px; }
.tab { height: 28px; line-height: 30px; border-left: 2px solid #8a8a8a; width: 144px; padding-left: 38px; letter-spacing: -.5px; }
.tabs svg + .tab { margin-left: 23px; }
.tab.top { width: 125px; }
.tab.cur { color: #3478f0; }
.layout { margin-left: auto; margin-right: 38px; font-size: 25px; font-weight: 500; letter-spacing: .7px; padding-top: 2px; }
.views { flex: 1; display: flex; gap: 6px; background: #d8d8d8; }
.stack { display: flex; flex-direction: column; gap: 4px; }
.vp { position: relative; background: #9ca3ab; }
.vtop { width: 1030px; height: 1490px; }
.vper { height: 762px; }
.vright { height: 730px; }
.grid { stroke: #8f989f; stroke-width: 2; fill: none; }
.major { stroke: #7d848b; stroke-width: 2; fill: none; }
.edge { stroke: #000; stroke-width: 4; fill: none; }
.ax { font-size: 23px; fill: #666b6e; }
.tag { position: absolute; left: 2px; top: 2px; height: 40px; line-height: 39px; padding: 0 8px 0 6px; background: rgba(138, 138, 138, .8); border: 2px solid #84888b; color: #fff; font-size: 24px; font-weight: 600; letter-spacing: .1px; }

.right { width: 598px; display: flex; flex-direction: column; background: #fff; }
.insp { display: flex; padding-left: 59px; color: #4a4a4a; }
.insp svg { width: 48.100px; height: 50px; fill: none; stroke: currentColor; stroke-width: 2; }
.insp b { width: 48px; text-align: center; font: 700 44px/50px "Open Sans", sans-serif; }
.insp .cur { color: #3478f0; }
.row { display: grid; grid-template-columns: 83px 46px 46px 46px 60px 48px 114px 46px 107px; height: 34px; flex: none; }
.row span { display: flex; align-items: center; justify-content: center; white-space: nowrap; }
.th { height: 44px; border-bottom: 2px solid #d4d4d4; padding: 3px 0 4px; color: #444; font-weight: 500; }
.th span { justify-content: flex-start; padding-left: 9px; border-right: 2px solid #dfdfdf; }
.rows { height: 612px; flex: none; border-bottom: 2px solid #cfcfcf; }
.row .dots { padding-left: 14px; font-size: 24px; }
.row .radio { margin-top: -1px; }
.row .txt { justify-content: space-between; padding: 2px 6px 0 13px; letter-spacing: -.1px; }
.ic { width: 28px; height: 30px; }
.dim { opacity: .4; }
.sw { width: 28px; height: 28px; border: 2px solid #000; }
.ud { width: 14px; height: 24px; }
.di { width: 32px; height: 32px; }
.black { background: #000; fill: #000; }
.red { background: #ea4024; fill: #ea4024; }
.violet { background: #bd65f6; fill: #bd65f6; }
.blue { background: #1531f5; fill: #1531f5; }
.green { background: #3a8a26; fill: #3a8a26; }
.white { background: #fff; fill: #fff; }
.di { background: none; }
.actions { height: 67px; flex: none; background: #ebebeb; border-bottom: 4px solid #8f8f8f; display: flex; gap: 36px; padding: 14px 38px 0; }
.btn { height: 34px; border-radius: 7px; background: #fdfdfd; box-shadow: 0 1px 2px #aaa; }
.second { height: 53px; padding-top: 1px; }
.help { flex: 1; min-height: 0; display: flex; }
article { width: 568px; overflow: hidden; color: #000; font: 32px/44px "DejaVu Sans", "Noto Sans CJK SC", sans-serif; }
h1 { margin: 0; height: 73px; background: #d6d6d6; padding-left: 16px; font: 700 37.500px/82px "Liberation Sans", sans-serif; }
.where { margin: 10px 0 0 16px; height: 60px; background: #d6d6d6; border-radius: 4px 0 0 4px; padding-left: 40px; font-size: 28px; letter-spacing: .15px; line-height: 60px; font-family: "Noto Sans CJK SC", sans-serif; color: #333; display: flex; }
.where b { color: #000; font: 700 28px/60px "DejaVu Sans", sans-serif; width: 34px; }
p { margin: 22px 0 0 16px; white-space: nowrap; letter-spacing: .05px; }
.steps { margin: 18px 0 0 36px; width: 496px; height: 148px; border: 2px dotted #000; border-radius: 10px; background: #f4f4f4; padding: 32px 20px 0; }
h2 { margin: 0; font-size: 31px; line-height: 44px; font-weight: 700; border-bottom: 2px solid #bdbdbd; }
.steps h2 { height: 47px; }
.step { display: flex; align-items: center; padding-left: 41px; height: 66px; }
.step a { color: #0000e0; margin-left: 30px; }
.step svg { margin-top: -14px; }
.opt { margin: 19px 16px 0; height: 43px; letter-spacing: .25px; }
h3 { margin: 22px 0 0 56px; font-size: 32px; line-height: 44px; }
.vtrack { width: 30px; background: #fafafa; border-left: 2px solid #e6e6e6; padding: 6px 0 0 6px; }
.vtrack i { width: 16px; height: 68px; border-radius: 8px; background: #c1c1c1; }
.htrack { height: 30px; flex: none; background: #fafafa; border-top: 2px solid #e6e6e6; padding: 6px; }
.htrack i { width: 307px; height: 16px; border-radius: 8px; background: #c1c1c1; }

.status { height: 56px; flex: none; background: linear-gradient(#dadada, #d0d0d0); display: flex; align-items: center; padding: 4px 0 0 9px; color: #000; white-space: nowrap; letter-spacing: -.1px; }
.prompt { margin-left: 6px; width: 2020px; letter-spacing: .08px; }
.units { width: 87px; color: #222; }
.popup { width: 139px; height: 32px; border: 2px solid #909090; border-radius: 8px; display: flex; align-items: center; justify-content: space-between; padding: 0 8px 0 12px; color: #333; font-weight: 500; letter-spacing: 0; }
.x { margin-left: 28px; width: 165px; }
.y { width: 170px; }
```
